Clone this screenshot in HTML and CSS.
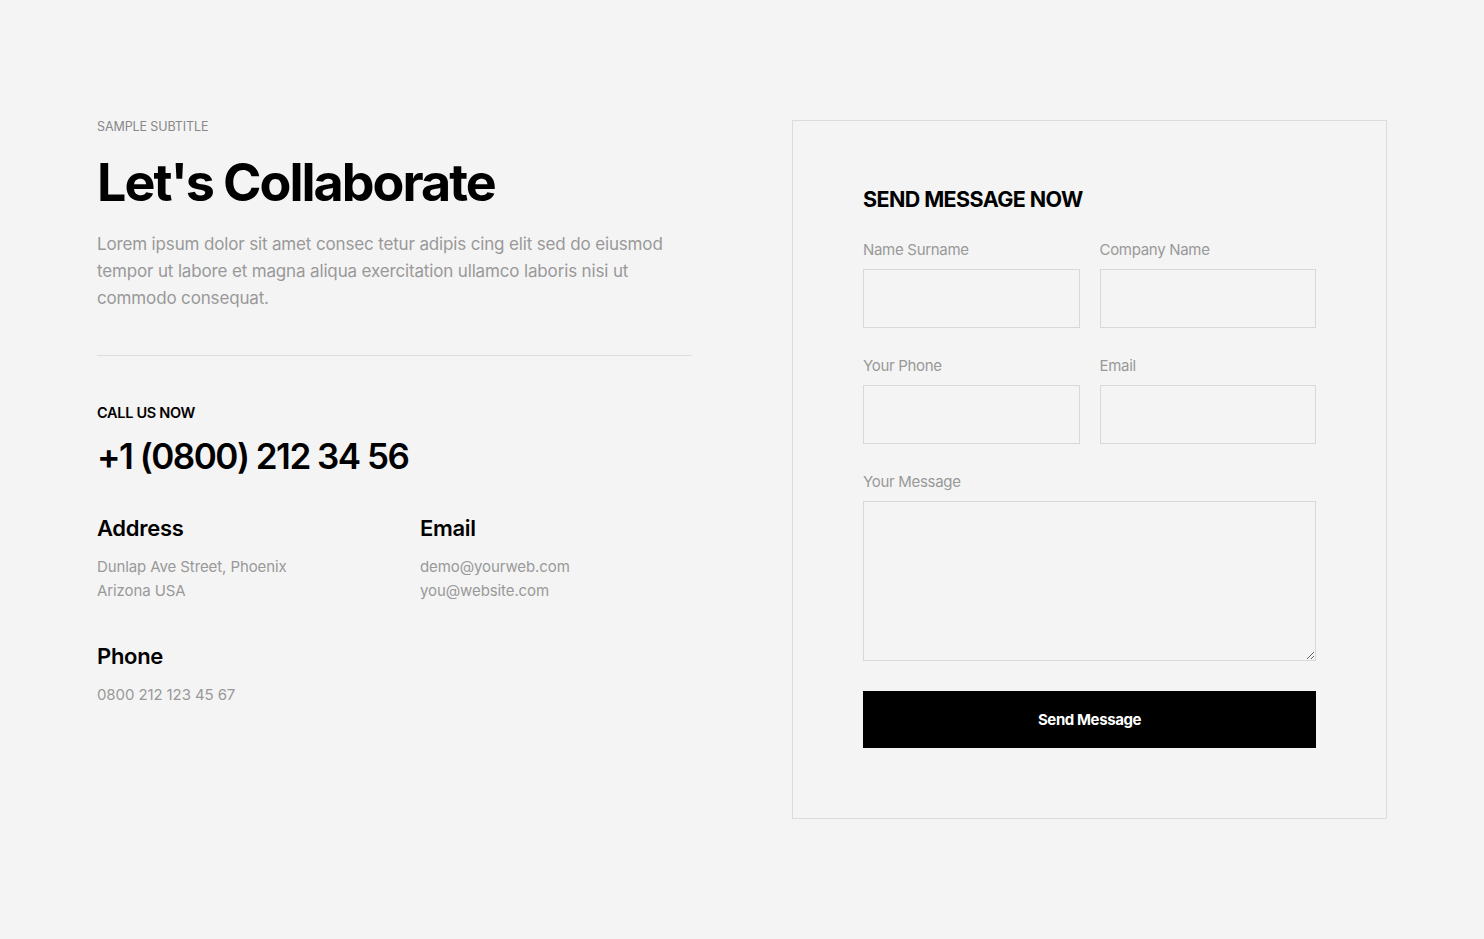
FILE: index.html
```html
<!DOCTYPE html>
<html lang="en">
<head>
<meta charset="utf-8">
<title>Let's Collaborate</title>
<link rel="stylesheet" href="styles.css">
</head>
<body>
<section class="contact">
  <div class="info">
    <div class="subtitle">SAMPLE SUBTITLE</div>
    <h1 class="title">Let's Collaborate</h1>
    <p class="lead">Lorem ipsum dolor sit amet consec tetur adipis cing elit sed do eiusmod tempor ut labore et magna aliqua exercitation ullamco laboris nisi ut commodo consequat.</p>
    <hr class="divider">
    <div class="call-label">CALL US NOW</div>
    <div class="call-number">+1 (0800) 212 34 56</div>
    <div class="details">
      <div class="detail">
        <h3>Address</h3>
        <p>Dunlap Ave Street, Phoenix<br>Arizona USA</p>
      </div>
      <div class="detail">
        <h3>Email</h3>
        <p>demo@yourweb.com<br>you@website.com</p>
      </div>
      <div class="detail">
        <h3>Phone</h3>
        <p>0800 212 123 45 67</p>
      </div>
    </div>
  </div>
  <form class="card" onsubmit="return false">
    <h2 class="card-title">SEND MESSAGE NOW</h2>
    <div class="fields">
      <label class="field"><span>Name Surname</span><input type="text"></label>
      <label class="field"><span>Company Name</span><input type="text"></label>
      <label class="field"><span>Your Phone</span><input type="text"></label>
      <label class="field"><span>Email</span><input type="text"></label>
      <label class="field wide"><span>Your Message</span><textarea></textarea></label>
    </div>
    <button class="send" type="submit">Send Message</button>
  </form>
</section>
</body>
</html>
```

FILE: styles.css
```css
* { box-sizing: border-box; }
html, body { margin: 0; padding: 0; }
body {
  background: #f4f4f4;
  font-family: Inter, "Noto Sans", sans-serif;
  color: #000;
}
.contact {
  width: 1290px;
  margin: 0 auto;
  padding-top: 120px;
  display: grid;
  grid-template-columns: 595px 595px;
  column-gap: 100px;
  align-items: start;
}
.subtitle {
  font-size: 12.5px;
  color: #888;
  letter-spacing: -0.1px;
  line-height: 14px;
}
.title {
  margin: 19px 0 0;
  font-size: 52px;
  line-height: 60px;
  font-weight: 700;
  letter-spacing: -2px;
}
.lead {
  margin: 18px 0 0;
  font-size: 17px;
  line-height: 27px;
  color: #999;
  letter-spacing: -0.15px;
  max-width: 590px;
}
.divider {
  border: 0;
  border-top: 1px solid #dcdcdc;
  margin: 43px 0 0;
}
.call-label {
  margin-top: 48px;
  font-size: 14.5px;
  font-weight: 600;
  letter-spacing: -0.3px;
  line-height: 18px;
}
.call-number {
  margin-top: 12px;
  font-size: 35px;
  line-height: 44px;
  font-weight: 600;
  letter-spacing: -1.5px;
}
.details {
  margin-top: 36px;
  display: grid;
  grid-template-columns: 323px 1fr;
  row-gap: 39px;
}
.detail h3 {
  margin: 0;
  font-size: 22px;
  line-height: 28px;
  font-weight: 600;
  letter-spacing: -0.3px;
}
.detail p {
  margin: 13px 0 0;
  font-size: 15px;
  line-height: 24px;
  color: #999;
  letter-spacing: -0.1px;
}
.card {
  border: 1px solid #dcdcdc;
  padding: 60px 70px 70px;
}
.card-title {
  margin: 0;
  font-size: 21.5px;
  line-height: 36px;
  font-weight: 700;
  letter-spacing: -0.6px;
}
.fields {
  margin-top: 23px;
  display: grid;
  grid-template-columns: 1fr 1fr;
  column-gap: 20px;
  row-gap: 28px;
}
.field { display: flex; flex-direction: column; }
.field.wide { grid-column: 1 / -1; }
.field span {
  font-size: 15px;
  line-height: 20px;
  color: #999;
  letter-spacing: -0.3px;
  margin-bottom: 9px;
}
.field input, .field textarea {
  display: block;
  width: 100%;
  height: 59px;
  border: 1px solid #d8d8d8;
  background: #f4f4f4;
  font: inherit;
  padding: 0 14px;
  margin: 0;
}
.field textarea {
  height: 160px;
  padding: 12px 14px;
}
.send {
  margin-top: 30px;
  width: 100%;
  height: 57px;
  border: 0;
  background: #000;
  color: #fff;
  font-family: inherit;
  font-size: 15px;
  font-weight: 700;
  letter-spacing: -0.4px;
  cursor: pointer;
}
```
